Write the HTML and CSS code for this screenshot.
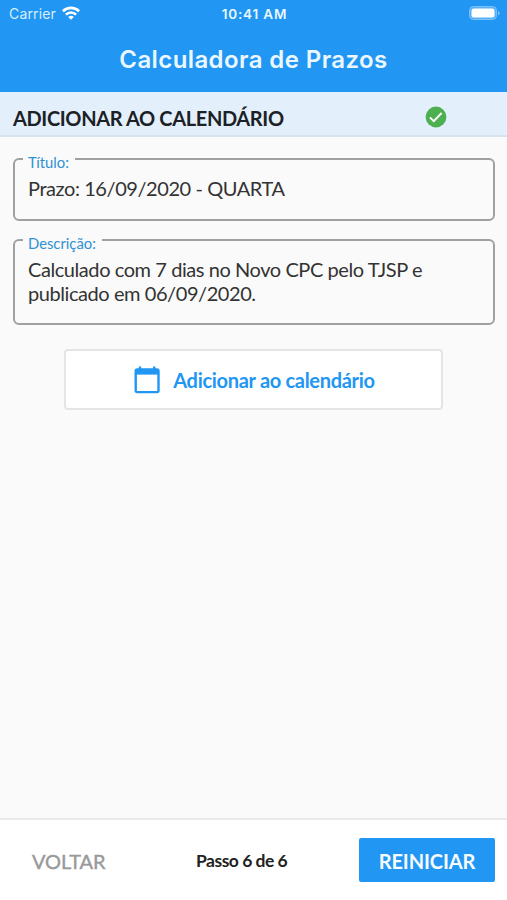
FILE: index.html
```html
<!DOCTYPE html>
<html lang="pt-BR">
<head>
<meta charset="utf-8">
<title>Calculadora de Prazos</title>
<link rel="stylesheet" href="styles.css">
</head>
<body>
<header class="app-bar">
  <div class="status">
    <div class="carrier"><span class="carrier-name">Carrier</span>
      <svg class="wifi" viewBox="0 0 18 14" width="18" height="14"><g fill="none" stroke="#fff" stroke-width="2.6"><path d="M.9 5.2a11.6 11.6 0 0 1 16.2 0"/><path d="M3.9 8.6a7.2 7.2 0 0 1 10.2 0"/></g><path d="M9 13.8 6.200 11a4 4 0 0 1 5.600 0z" fill="#fff"/></svg>
    </div>
    <span class="time">10:41 AM</span>
    <svg class="battery" viewBox="0 0 31 14" width="31" height="14"><rect x=".5" y=".5" width="27" height="13" rx="4" fill="#58b0f8" stroke="#7cc1fa"/><rect x="2.5" y="2.5" width="23" height="9" rx="2.2" fill="#fff"/><path d="M29 5v4.4q1.6-.6 1.6-2.2T29 5z" fill="#7cc1fa"/></svg>
  </div>
  <h1 class="title">Calculadora de Prazos</h1>
</header>
<section class="section-head">
  <h2 class="section-title">ADICIONAR AO CALENDÁRIO</h2>
  <svg class="check" viewBox="0 0 22 22" width="22" height="22"><circle cx="11" cy="11" r="10.4" fill="#4caf50"/><path d="M4.900 11.300l3.900 3.900 7.800-8.200" fill="none" stroke="#fff" stroke-width="1.9"/></svg>
</section>
<main class="content">
  <fieldset class="field field-title"><legend class="label">Título:</legend><p class="value">Prazo: 16/09/2020 - QUARTA</p></fieldset>
  <fieldset class="field field-desc"><legend class="label">Descrição:</legend><p class="value">Calculado com 7 dias no Novo CPC pelo TJSP e<br>publicado em 06/09/2020.</p></fieldset>
  <button class="add">
    <svg class="cal" viewBox="0 0 26 28" width="26" height="28"><rect x="1.700" y="3.500" width="22.800" height="22.600" rx="1.500" fill="none" stroke="#2196f3" stroke-width="2.400"/><rect x="1.500" y="3" width="23" height="5.600" fill="#2196f3"/><rect x="4.800" y=".5" width="2.400" height="4" fill="#2196f3"/><rect x="19" y=".5" width="2.400" height="4" fill="#2196f3"/></svg>
    <span class="add-text">Adicionar ao calendário</span>
  </button>
</main>
<footer class="footer">
  <button class="back">VOLTAR</button>
  <span class="step">Passo 6 de 6</span>
  <button class="restart">REINICIAR</button>
</footer>
</body>
</html>
```
FILE: styles.css
```css
* { box-sizing: border-box; }
body { margin: 0; height: 900px; display: flex; flex-direction: column; overflow: hidden; background: #fafafa; color: #333; font-family: Lato, sans-serif; white-space: nowrap; }
h1, h2, p { margin: 0; }
button { font-family: inherit; border: 0; padding: 0; background: none; }
svg { display: block; flex: none; }
.app-bar { height: 92px; background: #2196f3; color: #eaf7ff; font-family: Inter, sans-serif; }
.status { height: 28px; display: grid; grid-template-columns: 1fr auto 1fr; align-items: center; padding: 0 7px 0 9px; font-size: 13.5px; }
.carrier { display: flex; align-items: center; gap: 6px; margin-top: -1px; }
.carrier-name { font-size: 14px; color: #d9efff; letter-spacing: .15px; }
.wifi { margin-top: -2px; }
.time { font-weight: 600; letter-spacing: .85px; }
.battery { justify-self: end; margin-top: -2px; }
.title { height: 64px; line-height: 63px; text-align: center; font-size: 24px; font-weight: 600; letter-spacing: .4px; }
.section-head { height: 45px; display: flex; align-items: center; justify-content: space-between; padding: 8px 60px 0 13px; background: #e3f0fb; border-bottom: 2px solid #dae2e9; }
.section-title { font-size: 20px; line-height: 24px; font-weight: 700; color: #1c2126; letter-spacing: -.37px; }
.content { flex: 1; display: flex; flex-direction: column; padding: 10px 12px 0 13px; }
.field { margin: 0; padding: 0 13px 0 8px; border: 2px solid #a0a0a0; border-radius: 6px; min-width: 0; }
.field-title { height: 74px; }
.field-desc { height: 97px; margin-top: 7px; }
.label { padding: 6px 6px 0 5px; font-size: 14.8px; line-height: 18px; color: #2f91d2; }
.value { padding: 5px 0 0 5px; font-size: 20px; line-height: 24px; letter-spacing: -.43px; }
.check { margin-top: -2px; }
.add { align-self: center; width: 379px; height: 61px; margin: 24px 1px 0 0; padding-left: 2px; display: flex; align-items: center; justify-content: center; gap: 13px; background: #fff; border: 2px solid #e5e5e5; border-radius: 4px; color: #2196f3; }
.add-text { font-size: 20px; font-weight: 700; letter-spacing: -.3px; }
.footer { height: 82px; display: grid; grid-template-columns: 164px 1fr 136px; align-items: center; justify-items: start; padding: 0 12px 1px 32px; background: #fff; border-top: 2px solid #e9e9e9; }
.back { padding-top: 2px; font-size: 20px; color: #999; letter-spacing: -.1px; -webkit-text-stroke: .4px #999; }
.step { padding-top: 2px; font-size: 17.5px; font-weight: 700; color: #222; letter-spacing: -.5px; }
.restart { width: 136px; height: 44px; padding-top: 2px; border-radius: 2px; background: #2196f3; color: #f5fbff; font-size: 20px; font-weight: 700; letter-spacing: -.1px; }
```
